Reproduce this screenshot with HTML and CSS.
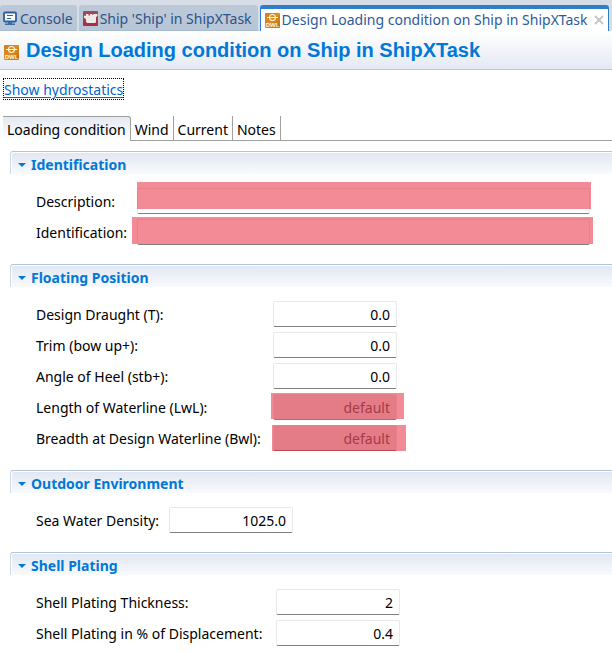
FILE: index.html
```html
<!DOCTYPE html>
<html lang="en">
<head>
<meta charset="utf-8">
<title>Design Loading condition on Ship in ShipXTask</title>
<link rel="stylesheet" href="styles.css">
</head>
<body>
<svg class="defs" aria-hidden="true">
  <defs>
    <linearGradient id="amber" x1="0" y1="0" x2="1" y2="1"><stop offset="0" stop-color="#c9812a"/><stop offset=".5" stop-color="#dc8c1e"/><stop offset="1" stop-color="#b86f18"/></linearGradient>
    <linearGradient id="wine" x1="0" y1="0" x2="0" y2="1"><stop offset="0" stop-color="#a04a5c"/><stop offset="1" stop-color="#a52f45"/></linearGradient>
    <symbol id="dwl" viewBox="0 0 15 15">
      <rect width="15" height="15" rx="1" fill="url(#amber)"/>
      <circle cx="7.5" cy="4.5" r="3" fill="none" stroke="#fff3dc" stroke-width="1.1"/>
      <path d="M2 4.5h11" stroke="#fff3dc"/>
      <text x="7.5" y="13.5" text-anchor="middle" class="dwl-text">DWL</text>
    </symbol>
  </defs>
</svg>
<nav class="editor-tabs">
  <button class="editor-tab" type="button">
    <svg class="icon" viewBox="0 0 15 15"><rect x="1" y="1.5" width="12" height="9" rx="1" fill="#fff" stroke="#2f5f9e" stroke-width="1.8"/><path d="M4 4.5h6M4 7.5h4" stroke="#365f9b"/><path d="M5 11h4v1.5h3V14H2v-1.5h3z" fill="#3c6eaa"/></svg>
    <span>Console</span>
  </button>
  <button class="editor-tab ship" type="button">
    <svg class="icon" viewBox="0 0 15 15"><rect width="15" height="15" rx="1" fill="url(#wine)"/><path d="M1 4.5l2 .5V3h2.500v1.500h1.500V3h2v1l2-1h3.500v2l-1.500 1v4.500l-.5 1.500H4l-1-1.500V8L1 7z" fill="#f0eae4"/></svg>
    <span>Ship 'Ship' in ShipXTask</span>
  </button>
  <button class="editor-tab active" type="button">
    <svg class="icon"><use href="#dwl"/></svg>
    <span>Design Loading condition on Ship in ShipXTask</span>
    <svg class="close" viewBox="0 0 10 10"><path d="M1 1l8 8M9 1L1 9" stroke="#c6c6c6" stroke-width="2"/></svg>
  </button>
</nav>
<header class="form-title">
  <svg class="icon"><use href="#dwl"/></svg>
  <h1>Design Loading condition on Ship in ShipXTask</h1>
</header>
<main>
  <a class="hydro" href="#hydrostatics">Show hydrostatics</a>
  <div class="page-tabs" role="tablist">
    <button class="page-tab selected" type="button" role="tab" aria-selected="true">Loading condition</button>
    <button class="page-tab" type="button" role="tab">Wind</button>
    <button class="page-tab" type="button" role="tab">Current</button>
    <button class="page-tab" type="button" role="tab">Notes</button>
  </div>

  <section class="section">
    <h2><svg class="twistie" viewBox="0 0 8 4"><path d="M0 0h8L4 4z"/></svg>Identification</h2>
    <div class="fields wide">
      <label for="description">Description:</label>
      <div class="field"><input id="description" type="text"><i class="mark mark-description"></i></div>
      <label for="ident">Identification:</label>
      <div class="field"><input id="ident" type="text"><i class="mark mark-ident"></i></div>
    </div>
  </section>

  <section class="section">
    <h2><svg class="twistie" viewBox="0 0 8 4"><path d="M0 0h8L4 4z"/></svg>Floating Position</h2>
    <div class="fields position">
      <label for="draught">Design Draught (T):</label>
      <div class="field"><input id="draught" type="text" value="0.0"></div>
      <label for="trim">Trim (bow up+):</label>
      <div class="field"><input id="trim" type="text" value="0.0"></div>
      <label for="heel">Angle of Heel (stb+):</label>
      <div class="field"><input id="heel" type="text" value="0.0"></div>
      <label for="lwl">Length of Waterline (LwL):</label>
      <div class="field"><input id="lwl" class="computed" type="text" value="default" readonly><i class="mark mark-lwl"></i></div>
      <label for="bwl">Breadth at Design Waterline (Bwl):</label>
      <div class="field"><input id="bwl" class="computed" type="text" value="default" readonly><i class="mark mark-bwl"></i></div>
    </div>
  </section>

  <section class="section">
    <h2><svg class="twistie" viewBox="0 0 8 4"><path d="M0 0h8L4 4z"/></svg>Outdoor Environment</h2>
    <div class="fields environment">
      <label for="density">Sea Water Density:</label>
      <div class="field"><input id="density" type="text" value="1025.0"></div>
    </div>
  </section>

  <section class="section">
    <h2><svg class="twistie" viewBox="0 0 8 4"><path d="M0 0h8L4 4z"/></svg>Shell Plating</h2>
    <div class="fields plating">
      <label for="thickness">Shell Plating Thickness:</label>
      <div class="field"><input id="thickness" type="text" value="2"></div>
      <label for="percent">Shell Plating in % of Displacement:</label>
      <div class="field"><input id="percent" type="text" value="0.4"></div>
    </div>
  </section>
</main>
</body>
</html>
```
FILE: styles.css
```css
* { box-sizing: border-box; }
body {
  margin: 0;
  background: #fff;
  color: #000;
  font: 14px/20px "Noto Sans", "Open Sans", sans-serif;
}
button, input { font: inherit; color: inherit; }
.defs { position: absolute; width: 0; height: 0; }
.icon { width: 15px; height: 15px; flex: none; display: block; }
.dwl-text { font: bold 6px "Liberation Sans", sans-serif; fill: #fff3dc; }

.editor-tabs {
  display: flex;
  gap: 2px;
  height: 31px;
  padding-top: 5px;
  background: #d6dde7;
  overflow: hidden;
}
.editor-tab {
  display: flex;
  align-items: center;
  gap: 2px;
  flex: none;
  padding: 2px 4px 0 3px;
  border: 0;
  border-bottom: 1px solid #a9bdd2;
  border-radius: 3px 3px 0 0;
  background: linear-gradient(#bcc9d8, #b7c6d7);
  color: #2f5288;
  white-space: nowrap;
}
.editor-tab.ship { padding: 2px 6px 0 4px; }
.editor-tab.active {
  padding: 0 4px;
  border: 1px solid #2f7fc8;
  border-top-width: 4px;
  border-bottom: 0;
  background: #fff;
  color: #2d5a9c;
}
.active .close { margin-left: 4px; }
.close { width: 10px; height: 10px; flex: none; }

.form-title {
  display: flex;
  align-items: center;
  gap: 7px;
  height: 39px;
  padding: 4px 4px 0;
  background: linear-gradient(#fff, #e4e9f2);
  border-bottom: 1px solid #b9c7d8;
}
h1 {
  margin: 0 0 4px;
  color: #0078d7;
  font: bold 20px/24px "Liberation Sans", sans-serif;
  white-space: nowrap;
}

main { padding: 8px 0 7px; }
.hydro {
  display: block;
  width: fit-content;
  margin-left: 3px;
  padding: 1px 1px 0;
  outline: 1px dotted #000;
  outline-offset: -1px;
  color: #0066cc;
  line-height: 21px;
  text-underline-offset: 2px;
}
.page-tabs {
  display: flex;
  height: 25px;
  margin: 16px 0 10px 3px;
  background: linear-gradient(#a0a0a0, #a0a0a0) bottom / 100% 1px no-repeat;
}
.page-tab {
  padding: 2px 4px 0;
  border: 0;
  border-right: 1px solid #a0a0a0;
  background: none;
  white-space: nowrap;
}
.page-tab.selected {
  border-top: 1px solid #a0a0a0;
  border-radius: 0 3px 0 0;
  background: linear-gradient(#e4e9f2, #fff);
}

.section { margin: 0 0 19px 10px; }
h2 {
  display: flex;
  align-items: center;
  gap: 5px;
  height: 23px;
  margin: 0 0 14px;
  padding: 3px 0 0 7px;
  border-top: 1px solid #b4c4d8;
  border-left: 1px solid #cfd9e6;
  border-radius: 3px 0 0 0;
  background: linear-gradient(#e0e6f1, #f9fafd);
  box-shadow: inset 1px 1px #fff;
  color: #0078d7;
  font-size: 14px;
  line-height: 20px;
}
.twistie { width: 8px; height: 4px; fill: #0078d7; }
.fields {
  display: grid;
  grid-auto-rows: 26px;
  gap: 5px 0;
  align-items: center;
  padding: 0 22px 0 26px;
}
.wide { grid-template-columns: 101px 1fr; }
.position { grid-template-columns: 237px 124px; }
.environment { grid-template-columns: 133px 124px; }
.plating { grid-template-columns: 240px 124px; }
label { padding-top: 2px; white-space: nowrap; }
.field { position: relative; height: 26px; }
input {
  display: block;
  width: 100%;
  height: 26px;
  padding: 1px 6px 0;
  border: 1px solid #e9e9e9;
  border-bottom-color: #808080;
  border-radius: 2px;
  background: #fff;
  text-align: right;
  outline: none;
}
.computed { background: #e0e0e0; color: #606060; }
.mark {
  position: absolute;
  background: rgb(231 24 45 / 50%);
  pointer-events: none;
}
.mark-description { inset: -6px -1px 5px 0; }
.mark-ident { inset: -2px -3px 1px -5px; }
.mark-lwl { inset: -1px -7px 1px -2px; }
.mark-bwl { inset: 0 -9px 0 -1px; }
```
